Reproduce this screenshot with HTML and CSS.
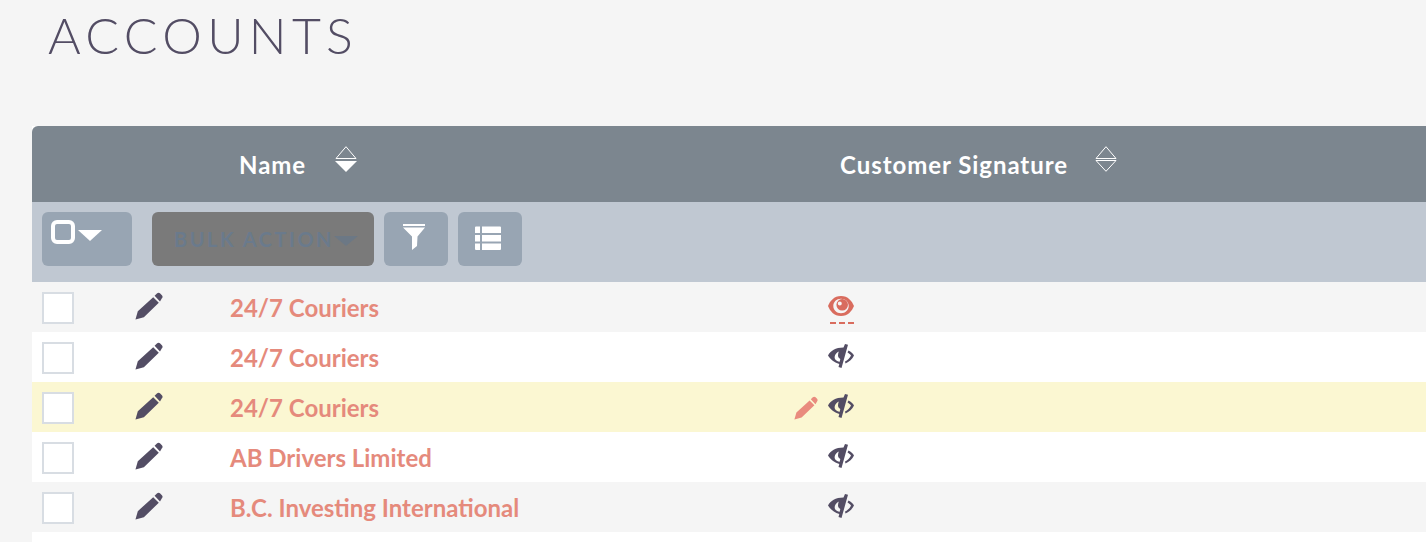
FILE: index.html
```html
<!DOCTYPE html>
<html lang="en">
<head>
<meta charset="utf-8">
<title>Accounts</title>
<link rel="stylesheet" href="styles.css">
</head>
<body>
<svg class="defs" width="0" height="0" aria-hidden="true">
  <defs>
    <symbol id="pencil" viewBox="0 0 30 30">
      <path d="M.5 29.500 L3 20.500 L19.500 5.500 L25.500 11.500 L9.500 27 Z M21 4 L23.500 1.600 C24.600 .6 26 .6 27 1.600 L28.800 3.400 C29.800 4.400 29.800 5.800 28.800 6.800 L26.800 10.200 Z"/>
    </symbol>
    <symbol id="sort-open" viewBox="0 0 22 26">
      <path d="M11 .7 L21 12.500 H1 Z M1 14.500 H21 L11 25.300 Z" fill="none" stroke="#fff" stroke-width="1"/>
    </symbol>
    <symbol id="sort-down" viewBox="0 0 22 26">
      <path d="M11 .7 L21 12.500 H1 Z" fill="none" stroke="#fff" stroke-width="1"/>
      <path d="M0 15 H22 L11 26 Z" fill="#fff"/>
    </symbol>
    <symbol id="eye-off" viewBox="0 0 26 24">
      <path fill-rule="evenodd" d="M17 0 L20 .8 L13.500 24 L10.500 23 L11.300 20 C6 18.500 2 15 0 11.500 C2.500 7 7.500 3.500 15.500 3.500 Z M10.800 7.500 C7 9.500 5.800 13 7.300 15.500 C8.300 16.800 9.800 17.500 11.700 17.700 L12.300 15 C10.800 14.300 10 13 10 11.500 C10 10 10.400 8.600 10.800 7.500 Z"/>
      <path d="M20.500 6.500 C23 7.500 25 9.500 26 11.500 C24.500 15 21 18 17.500 19.500 L17 17.500 C19.500 16.500 22 14 23 11.500 C22 10 20.500 9 19.500 8.500 Z"/>
    </symbol>
  </defs>
</svg>

<h1 class="title">ACCOUNTS</h1>

<main class="table">
  <header class="head row-grid">
    <span></span>
    <span></span>
    <div class="col-title col-name">
      <span>Name</span>
      <svg class="sort"><use href="#sort-down"/></svg>
    </div>
    <div class="col-title col-sig">
      <span>Customer Signature</span>
      <svg class="sort"><use href="#sort-open"/></svg>
    </div>
  </header>

  <div class="toolbar">
    <button class="btn select-btn" type="button"><span class="select-box"></span><span class="caret"></span></button>
    <button class="btn bulk-btn" type="button"><span>BULK ACTION</span><span class="caret dim"></span></button>
    <button class="btn icon-btn" type="button">
      <svg class="filter-icon" width="22" height="26" viewBox="0 0 22 26"><path d="M0 0h22v2H0z M0 3.500h22L14.500 12.500 L14 22 L9 26 L9 12.500 Z" fill="#fff"/></svg>
    </button>
    <button class="btn icon-btn" type="button">
      <svg class="list-icon" width="26" height="24" viewBox="0 0 26 24"><path d="M0 1.500a1 1 0 0 1 1-1h4v6.500H0z M7 .5h18a1 1 0 0 1 1 1V7H7z M0 9h5v6.500H0z M7 9h19v6.500H7z M0 17.500h5V24H1a1 1 0 0 1-1-1z M7 17.500h19V23a1 1 0 0 1-1 1H7z" fill="#fff"/></svg>
    </button>
  </div>

  <div class="row row-grid">
    <span class="check"></span>
    <svg class="edit"><use href="#pencil"/></svg>
    <a class="name" href="#">24/7 Couriers</a>
    <div class="sig">
      <svg class="eye" width="26" height="28" viewBox="0 0 26 28">
        <path fill-rule="evenodd" d="M13 0 C20 0 24 5 26 10 C24 15 20 20 13 20 C6 20 2 15 0 10 C2 5 6 0 13 0 Z M13 2.800 C8.500 2.800 5.300 6 5.300 10 C5.300 14 8.500 17.200 13 17.200 C17.500 17.200 20.700 14 20.700 10 C20.700 6 17.500 2.800 13 2.800 Z"/>
        <path fill-rule="evenodd" d="M14.200 3 A5.800 5.800 0 1 1 8.400 8.800 A5.800 5.800 0 0 1 14.200 3 Z M11.800 5.400 A2 2 0 1 0 11.800 9.400 A2 2 0 0 0 11.800 5.400 Z"/>
        <path d="M2 26h6v2H2zM11 26h6v2h-6zM20 26h6v2h-6z"/>
      </svg>
    </div>
  </div>
  <div class="row row-grid odd">
    <span class="check"></span>
    <svg class="edit"><use href="#pencil"/></svg>
    <a class="name" href="#">24/7 Couriers</a>
    <div class="sig"><svg class="off"><use href="#eye-off"/></svg></div>
  </div>
  <div class="row row-grid hover">
    <span class="check"></span>
    <svg class="edit"><use href="#pencil"/></svg>
    <a class="name" href="#">24/7 Couriers</a>
    <div class="sig">
      <svg class="inline-edit"><use href="#pencil"/></svg>
      <svg class="off"><use href="#eye-off"/></svg>
    </div>
  </div>
  <div class="row row-grid odd">
    <span class="check"></span>
    <svg class="edit"><use href="#pencil"/></svg>
    <a class="name" href="#">AB Drivers Limited</a>
    <div class="sig"><svg class="off"><use href="#eye-off"/></svg></div>
  </div>
  <div class="row row-grid">
    <span class="check"></span>
    <svg class="edit"><use href="#pencil"/></svg>
    <a class="name" href="#">B.C. Investing International</a>
    <div class="sig"><svg class="off"><use href="#eye-off"/></svg></div>
  </div>
  <div class="tail"></div>
</main>
</body>
</html>
```
FILE: styles.css
```css
* { box-sizing: border-box; }
html, body { margin: 0; height: 100%; overflow: hidden; }
body {
  background: #f5f5f5;
  font-family: Lato, "Liberation Sans", sans-serif;
  color: #534d64;
}
.defs { position: absolute; }

.title {
  margin: 0;
  padding: 6px 0 0 48px;
  height: 126px;
  font-size: 50px;
  line-height: 58px;
  font-weight: 300;
  letter-spacing: 5.300px;
  color: #534d64;
}

.table { margin-left: 32px; background: #fff; height: 416px; }

.row-grid {
  display: grid;
  grid-template-columns: 103px 95px 598px 1fr;
  align-items: center;
}

.head {
  height: 76px;
  background: #7c868f;
  border-radius: 6px 0 0 0;
  color: #fff;
}
.col-title {
  display: flex;
  align-items: center;
  font-size: 24px;
  font-weight: 700;
  letter-spacing: .95px;
  height: 76px;
}
.col-name { padding-left: 9px; }
.col-sig { padding-left: 12px; }
.sort {
  width: 22px;
  height: 26px;
  margin-left: 27px;
  margin-top: -10px;
}
.col-name .sort { margin-left: 29px; }

.toolbar {
  display: flex;
  align-items: flex-start;
  height: 80px;
  padding: 10px 0 0 10px;
  background: #c0c8d2;
}
.btn {
  display: flex;
  align-items: center;
  justify-content: center;
  height: 54px;
  border: 0;
  padding: 0;
  border-radius: 6px;
  background: #98a5b3;
  font-family: inherit;
}
.select-btn {
  width: 90px;
  margin-right: 20px;
  justify-content: flex-start;
  padding: 0 0 14px 9px;
}
.select-box {
  width: 24px;
  height: 24px;
  border: 4px solid #fff;
  border-radius: 6px;
}
.caret {
  width: 0;
  height: 0;
  margin-left: 3px;
  margin-top: 7px;
  border-style: solid;
  border-width: 11px 12.500px 0;
  border-color: #fff transparent transparent;
}
.bulk-btn {
  width: 222px;
  margin-right: 10px;
  justify-content: flex-start;
  padding-left: 22px;
  background: #7a7a7a;
  color: #6a7a8c;
  font-size: 20px;
  font-weight: 700;
  letter-spacing: 2.500px;
}
.caret.dim { margin-top: 4px; margin-left: 0; border-width: 10px 12px 0; border-top-color: #6c7885; }
.icon-btn { width: 64px; margin-right: 10px; }
.filter-icon { margin: -4px 4px 0 0; }
.list-icon { margin: -2px 4px 0 0; }

.row { height: 50px; background: #f5f5f5; }
.row.odd { background: #fff; }
.row.hover { background: #fbf7d2; }

.check {
  width: 32px;
  height: 32px;
  margin: 1px 0 0 10px;
  background: #fff;
  border: 2px solid #d8dde3;
}
.edit { width: 28px; height: 28px; margin-top: -3px; fill: #534d64; }
.name {
  font-size: 24px;
  font-weight: 700;
  color: #e58a7c;
  text-decoration: none;
  white-space: nowrap;
}
.sig { position: relative; display: flex; align-items: center; }
.eye { fill: #d96c5e; margin-top: 6px; }
.off { width: 26px; height: 24px; fill: #534d64; margin-top: -2px; }
.inline-edit {
  position: absolute;
  left: -34px;
  top: 0;
  width: 24px;
  height: 24px;
  fill: #e98b7e;
}
.tail { height: 10px; background: #fff; }
```
